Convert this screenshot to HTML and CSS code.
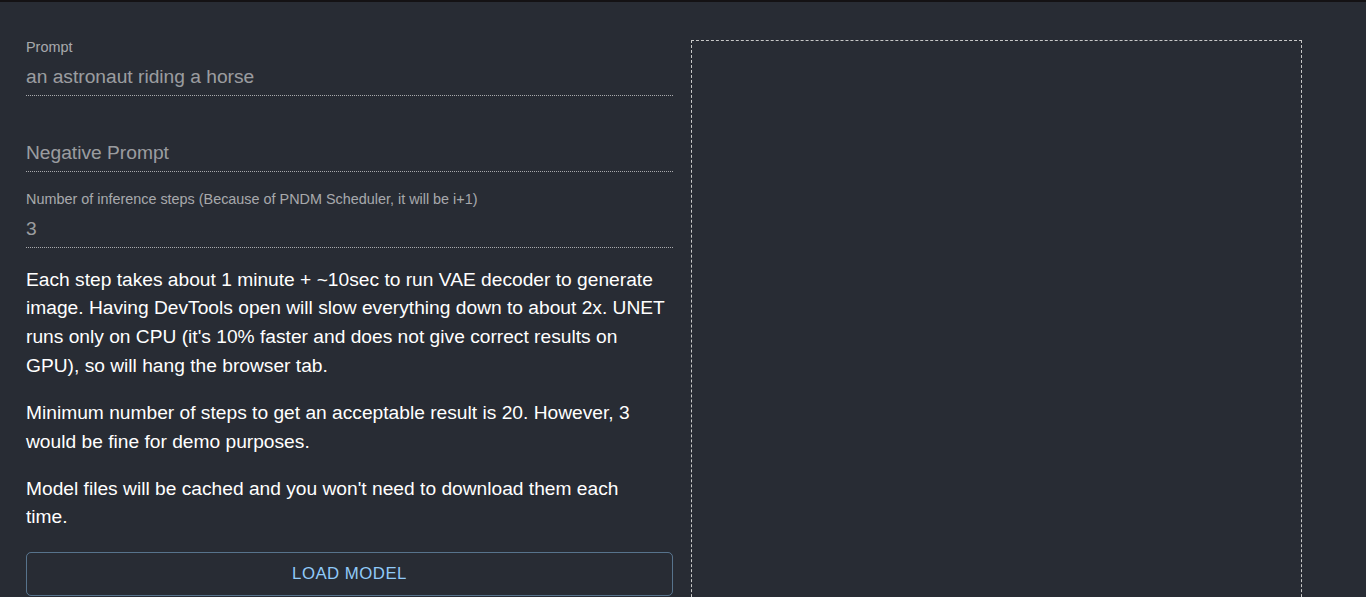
FILE: index.html
```html
<!DOCTYPE html>
<html lang="en">
<head>
<meta charset="utf-8">
<title>Stable Diffusion</title>
<link rel="stylesheet" href="styles.css">
</head>
<body>
<div class="topline"></div>
<main class="app">
  <section class="controls">
    <div class="field">
      <label class="field-label">Prompt</label>
      <div class="field-input">an astronaut riding a horse</div>
    </div>
    <div class="field">
      <label class="field-label"></label>
      <div class="field-input">Negative Prompt</div>
    </div>
    <div class="field">
      <label class="field-label">Number of inference steps (Because of PNDM Scheduler, it will be i+1)</label>
      <div class="field-input">3</div>
    </div>
    <p class="note first">Each step takes about 1 minute + ~10sec to run VAE decoder to generate image. Having DevTools open will slow everything down to about 2x. UNET runs only on CPU (it's 10% faster and does not give correct results on GPU), so will hang the browser tab.</p>
    <p class="note">Minimum number of steps to get an acceptable result is 20. However, 3 would be fine for demo purposes.</p>
    <p class="note narrow">Model files will be cached and you won't need to download them each time.</p>
    <button class="load-btn" type="button">Load Model</button>
  </section>
  <section class="canvas-box"></section>
</main>
</body>
</html>
```
FILE: styles.css
```css
html, body {
  margin: 0;
  padding: 0;
  background: #282c34;
  height: 100%;
  overflow: hidden;
}
body {
  font-family: "Liberation Sans", Arial, sans-serif;
  color: #ffffff;
}
.topline {
  height: 2px;
  background: #141214;
}
.app {
  display: flex;
  align-items: flex-start;
  padding-top: 37px;
  padding-left: 26px;
  gap: 18px;
}
.controls {
  width: 647px;
  display: flex;
  flex-direction: column;
}
.field {
  margin-bottom: 19px;
}
.field:nth-child(3) {
  margin-bottom: 0;
}
.field-label {
  display: block;
  height: 17px;
  font-size: 14.4px;
  line-height: 17px;
  color: rgba(255, 255, 255, 0.6);
}
.field-input {
  padding-top: 7px;
  padding-bottom: 5px;
  font-size: 19.2px;
  line-height: 27px;
  color: rgba(255, 255, 255, 0.55);
  border-bottom: 1px dotted rgba(255, 255, 255, 0.6);
}
.note {
  margin: 18.5px 0 0 0;
  font-size: 19.2px;
  line-height: 28.7px;
  color: #ffffff;
}
.note.first {
  margin-top: 17.5px;
}
.note.narrow {
  max-width: 610px;
}
.load-btn {
  margin-top: 20px;
  width: 647px;
  height: 44px;
  background: transparent;
  border: 1px solid rgba(144, 202, 249, 0.45);
  border-radius: 5px;
  color: #90caf9;
  font-family: "Liberation Sans", Arial, sans-serif;
  font-size: 16.8px;
  letter-spacing: 0.48px;
  text-transform: uppercase;
  padding: 0;
  line-height: 42px;
}
.canvas-box {
  margin-top: 1px;
  width: 609px;
  height: 640px;
  border: 1px dashed #c8c8c8;
}
```
